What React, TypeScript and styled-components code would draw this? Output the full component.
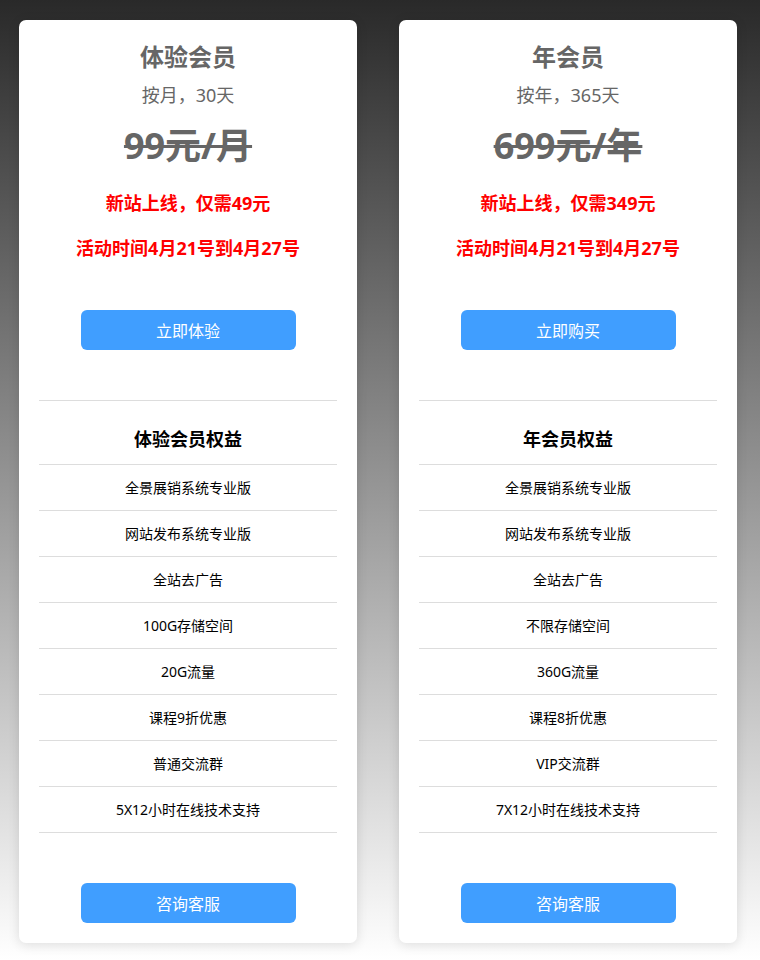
import React from "react";
import styled, { createGlobalStyle } from "styled-components";

const Global = createGlobalStyle`
  html, body { margin: 0; padding: 0; }
  body {
    font-family: "Noto Sans", "Noto Sans CJK SC", sans-serif;
    background: linear-gradient(to bottom, #292929 0%, #ffffff 100%);
    min-height: 960px;
  }
`;

const Page = styled.div`
  display: grid;
  grid-template-columns: 1fr 1fr;
  padding: 20px 0 17px;
  min-height: 923px;
`;

const Card = styled.div`
  margin: 0 23px 0 19px;
  background: #fff;
  border-radius: 7px;
  box-shadow: 0 2px 12px rgba(0, 0, 0, 0.12);
  padding: 21px 20px 20px;
  display: flex;
  flex-direction: column;
  align-items: stretch;
  text-align: center;
`;

const Title = styled.div`
  font-size: 24px;
  font-weight: 700;
  line-height: 32px;
  color: #666;
`;

const Sub = styled.div`
  margin-top: 8px;
  font-size: 18px;
  line-height: 28px;
  color: #666;
`;

const Price = styled.div`
  margin-top: 13px;
  font-size: 36px;
  font-weight: 700;
  line-height: 48px;
  color: #666;
  text-decoration: line-through;
`;

const Promo = styled.div<{ $gap: number }>`
  margin-top: ${(p) => p.$gap}px;
  font-size: 18px;
  font-weight: 700;
  line-height: 28px;
  color: #ff0000;
`;

const Button = styled.button<{ $top: number }>`
  align-self: center;
  margin-top: ${(p) => p.$top}px;
  width: 215px;
  height: 40px;
  border: none;
  border-radius: 6px;
  background: #409eff;
  color: #fff;
  font-family: "Noto Sans", "Noto Sans CJK SC", sans-serif;
  font-size: 16px;
  cursor: pointer;
`;

const Benefits = styled.div`
  margin-top: 50px;
  border-top: 1px solid #ddd;
`;

const BenefitsHead = styled.div`
  padding: 24px 0 11px;
  font-size: 18px;
  font-weight: 700;
  line-height: 28px;
  color: #000;
  border-bottom: 1px solid #ddd;
`;

const Row = styled.div`
  height: 45px;
  line-height: 45px;
  font-size: 14px;
  color: #000;
  border-bottom: 1px solid #ddd;
`;

type Plan = {
  title: string;
  sub: string;
  price: string;
  promo: string;
  buy: string;
  head: string;
  rows: string[];
};

const plans: Plan[] = [
  {
    title: "体验会员",
    sub: "按月，30天",
    price: "99元/月",
    promo: "新站上线，仅需49元",
    buy: "立即体验",
    head: "体验会员权益",
    rows: [
      "全景展销系统专业版",
      "网站发布系统专业版",
      "全站去广告",
      "100G存储空间",
      "20G流量",
      "课程9折优惠",
      "普通交流群",
      "5X12小时在线技术支持",
    ],
  },
  {
    title: "年会员",
    sub: "按年，365天",
    price: "699元/年",
    promo: "新站上线，仅需349元",
    buy: "立即购买",
    head: "年会员权益",
    rows: [
      "全景展销系统专业版",
      "网站发布系统专业版",
      "全站去广告",
      "不限存储空间",
      "360G流量",
      "课程8折优惠",
      "VIP交流群",
      "7X12小时在线技术支持",
    ],
  },
];

export default function App() {
  return (
    <>
      <Global />
      <Page>
        {plans.map((p) => (
          <Card key={p.title}>
            <Title>{p.title}</Title>
            <Sub>{p.sub}</Sub>
            <Price>{p.price}</Price>
            <Promo $gap={19}>{p.promo}</Promo>
            <Promo $gap={17}>活动时间4月21号到4月27号</Promo>
            <Button $top={48}>{p.buy}</Button>
            <Benefits>
              <BenefitsHead>{p.head}</BenefitsHead>
              {p.rows.map((r) => (
                <Row key={r}>{r}</Row>
              ))}
            </Benefits>
            <Button $top={50}>咨询客服</Button>
          </Card>
        ))}
      </Page>
    </>
  );
}
